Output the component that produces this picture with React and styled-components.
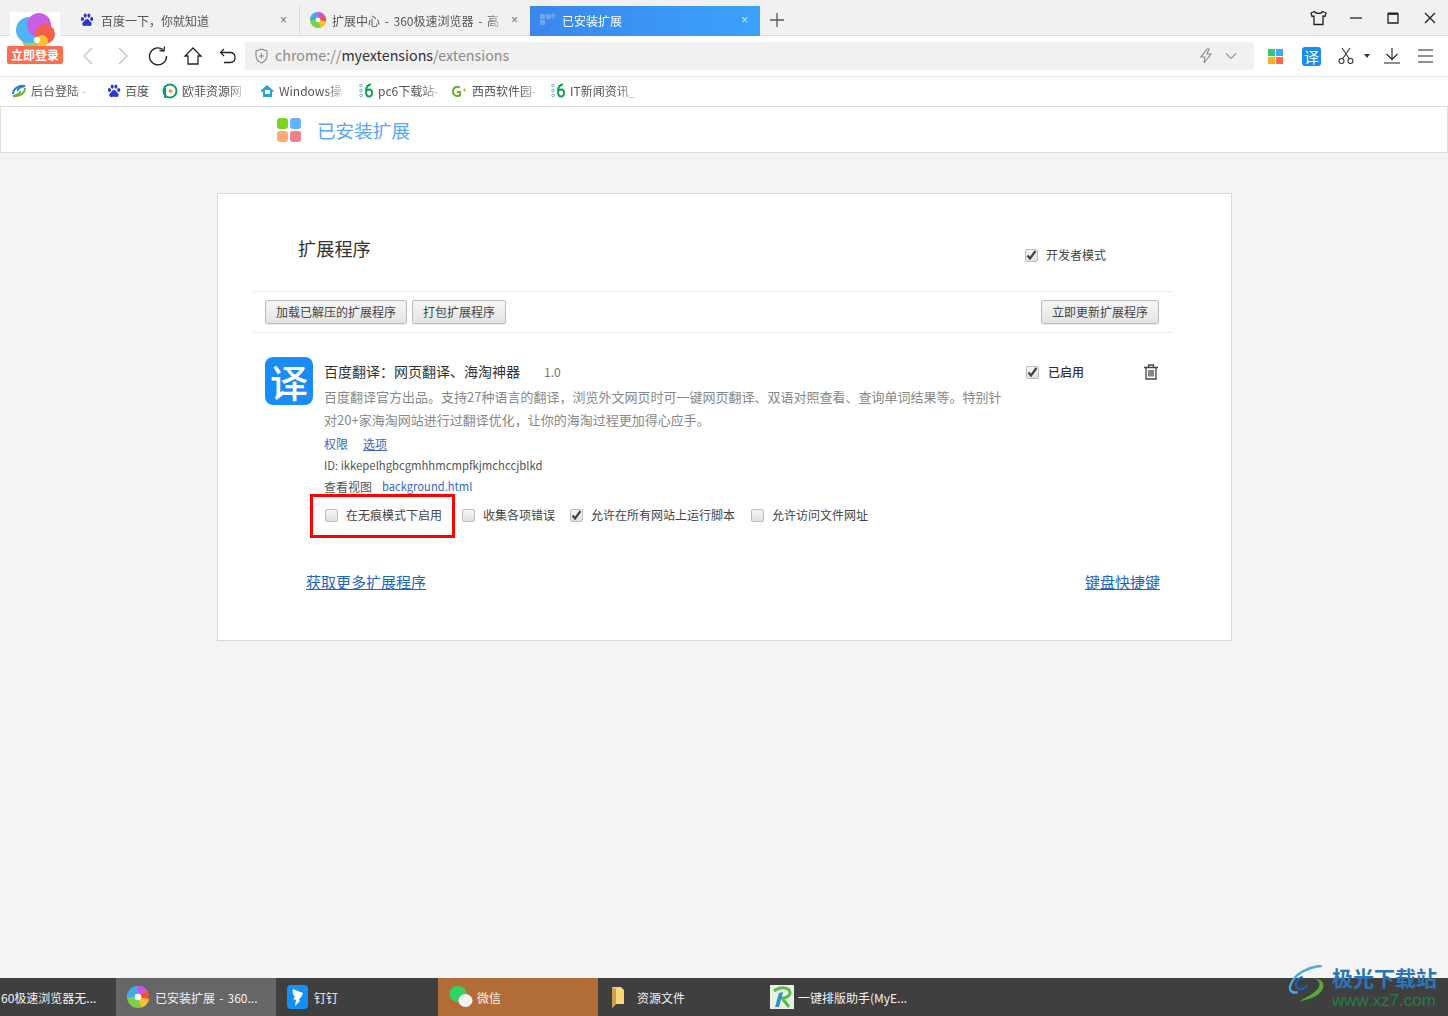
import React from "react";
import styled, { createGlobalStyle } from "styled-components";

const GlobalStyle = createGlobalStyle`
  html, body {
    margin: 0;
    padding: 0;
    background: #f4f4f4;
    overflow: hidden;
  }
  * { box-sizing: border-box; }
  body {
    font-family: "Noto Sans CJK SC", "Noto Sans", "Liberation Sans", sans-serif;
    font-size: 12px;
    color: #333;
  }
`;

const Win = styled.div`
  position: relative;
  width: 1448px;
  height: 1016px;
  display: flex;
  flex-direction: column;
`;

/* tab strip */
const TabBar = styled.div`
  height: 36px;
  flex: none;
  display: flex;
  align-items: flex-end;
  background: #f1f1f1;
  border-bottom: 1px solid #dcdcdc;
  padding-left: 70px;
`;

const Tab = styled.div`
  width: ${(p) => p.$w}px;
  height: 30px;
  flex: none;
  display: flex;
  align-items: center;
  margin-bottom: -1px;
  padding: 0 10px 2px;
  gap: ${(p) => p.$gap || 7}px;
  border-right: ${(p) => (p.$sep ? "1px solid #d8d8d8" : "none")};
  color: ${(p) => (p.$active ? "#fff" : "#555")};
  background: ${(p) => (p.$active ? "linear-gradient(90deg, #3a86ee, #3ba2fb)" : "transparent")};
`;

const TabTitle = styled.span`
  flex: 1;
  white-space: nowrap;
  overflow: hidden;
  font-size: 12px;
  word-spacing: 2px;
  -webkit-mask-image: linear-gradient(90deg, #000 90%, transparent);
`;

const TabClose = styled.span`
  width: 9px;
  flex: none;
  font-size: 12px;
  line-height: 12px;
  font-family: "Liberation Sans", sans-serif;
  color: ${(p) => (p.$active ? "#cfe4ff" : "#777")};
`;

const NewTab = styled.div`
  width: 34px;
  height: 30px;
  display: flex;
  align-items: center;
  justify-content: center;
`;

const WinControls = styled.div`
  margin-left: auto;
  height: 35px;
  display: flex;
  align-items: center;
  padding-right: 10px;
  gap: 21px;
`;

/* toolbar */
const ToolBar = styled.div`
  height: 41px;
  flex: none;
  display: flex;
  align-items: center;
  background: #fff;
  border-bottom: 1px solid #e4e4e4;
  padding-left: 78px;
`;

const NavGroup = styled.div`
  display: flex;
  align-items: center;
  flex: none;
  gap: 15px;
  width: 167px;
`;

const Address = styled.div`
  width: 1009px;
  height: 28px;
  flex: none;
  background: #f1f1f1;
  border-radius: 3px;
  display: flex;
  align-items: center;
  padding: 0 17px 0 9px;
  gap: 6px;
  font-size: 14.3px;
  color: #8a8a8a;
`;

const Url = styled.div`
  flex: 1;
  padding-bottom: 3px;
  b { font-weight: 400; color: #333; }
`;

const BoltSlot = styled.div`
  margin-right: 6px;
`;

const RightTools = styled.div`
  display: flex;
  align-items: center;
  flex: none;
  padding-left: 13px;
`;

const ToolSlot = styled.div`
  width: ${(p) => p.$w}px;
  display: flex;
  align-items: center;
  justify-content: center;
`;

const TranslateBadge = styled.div`
  width: ${(p) => p.$size}px;
  height: ${(p) => p.$size}px;
  flex: none;
  border-radius: ${(p) => Math.round(p.$size / 6)}px;
  background: #1a8cf5;
  color: #fff;
  display: flex;
  align-items: center;
  justify-content: center;
  font-size: ${(p) => Math.round(p.$size * 0.8)}px;
  line-height: 1;
  font-weight: ${(p) => (p.$size > 30 ? 500 : 400)};
`;

/* bookmarks */
const Bookmarks = styled.div`
  height: 30px;
  flex: none;
  display: flex;
  align-items: center;
  background: #fff;
  border-bottom: 1px solid #dedede;
  padding-bottom: 2px;
`;

const Mark = styled.div`
  width: ${(p) => p.$w}px;
  flex: none;
  display: flex;
  align-items: center;
  gap: ${(p) => p.$gap || 5}px;
  padding-left: 12px;
  color: #555;
  font-size: 12px;
  white-space: nowrap;
`;

const MarkText = styled.span`
  display: block;
  -webkit-mask-image: ${(p) => (p.$fade ? "linear-gradient(90deg, #000 75%, rgba(0,0,0,0.25))" : "none")};
`;

/* page */
const PageHead = styled.div`
  height: 46px;
  flex: none;
  background: #fff;
  border: 1px solid #dedede;
  border-top: none;
  display: flex;
  align-items: center;
  padding-left: 276px;
  gap: 16px;
`;

const HeadTitle = styled.div`
  font-size: 18.6px;
  color: #5aa7f6;
`;

const Grid = styled.div`
  display: grid;
  grid-template-columns: ${(p) => p.$cell}px ${(p) => p.$cell}px;
  gap: ${(p) => p.$gap}px;
`;

const Cell = styled.div`
  height: ${(p) => p.$s}px;
  border-radius: ${(p) => p.$r || 0}px;
  background: ${(p) => p.$c};
`;

const Main = styled.main`
  flex: 1;
  background: #f4f4f4;
  padding: 40px 0 0 217px;
`;

const Card = styled.section`
  width: 1015px;
  height: 448px;
  background: #fff;
  border: 1px solid #d9d9d9;
  padding: 0 59px 0 35px;
`;

const TopRow = styled.div`
  height: 98px;
  border-bottom: 1px solid #ececec;
  display: flex;
  padding: 41px 0 0 45px;
`;

const Heading = styled.h1`
  margin: 0;
  font-size: 18.2px;
  line-height: 26px;
  font-weight: 400;
  color: #333;
  width: 727px;
`;

const DevMode = styled.div`
  padding-top: 12px;
`;

const Check = styled.label`
  display: flex;
  align-items: center;
  gap: ${(p) => p.$gap || 8}px;
  font-size: 12px;
  line-height: 16px;
  color: ${(p) => p.$c || "#444"};
  font-weight: ${(p) => p.$weight || 400};
  white-space: nowrap;
`;

const Box = styled.span`
  width: 13px;
  height: 13px;
  flex: none;
  border: 1px solid #bcbcbc;
  border-radius: 2px;
  background: linear-gradient(#f6f6f6, #e2e2e2);
  display: flex;
  align-items: center;
  justify-content: center;
`;

const ButtonRow = styled.div`
  height: 41px;
  border-bottom: 1px solid #ececec;
  display: flex;
  align-items: center;
  padding: 0 12px;
  gap: 5px;
`;

const Btn = styled.button`
  height: 24px;
  padding: 0 0 2px;
  width: ${(p) => p.$w}px;
  margin-left: ${(p) => p.$ml || 0}px;
  border: 1px solid #bcbcbc;
  border-radius: 2px;
  background: linear-gradient(#f6f6f6, #e4e4e4);
  box-shadow: 0 1px 1px rgba(0, 0, 0, 0.08);
  font-family: inherit;
  font-size: 12px;
  color: #444;
`;

const Ext = styled.div`
  display: flex;
  padding: 24px 0 0 12px;
  height: 239px;
`;

const ExtBody = styled.div`
  width: 701px;
  margin-left: 11px;
  flex: none;
`;

const NameRow = styled.div`
  height: 28px;
  display: flex;
  align-items: center;
  gap: 24px;
  font-size: 14px;
  color: #333;
`;

const Version = styled.span`
  font-size: 12px;
  color: #777;
`;

const Desc = styled.p`
  margin: 0;
  width: 680px;
  font-size: 13px;
  line-height: 23px;
  color: #888;
  height: 46px;
`;

const MetaRow = styled.div`
  height: ${(p) => p.$h || 22}px;
  display: flex;
  align-items: center;
  gap: ${(p) => p.$gap || 10}px;
  font-size: ${(p) => p.$fs || 12}px;
  color: #555;
`;

const Lnk = styled.a`
  color: #3b66c8;
  font-size: ${(p) => p.$fs || 12}px;
  text-decoration: ${(p) => (p.$u ? "underline" : "none")};
`;

const OptionRow = styled.div`
  display: flex;
  align-items: center;
  height: 34px;
  padding: 2px 0 0 1px;
`;

const Option = styled.div`
  position: relative;
  width: ${(p) => p.$w}px;
  flex: none;
`;

/* annotation drawn over the first option */
const RedBox = styled.div`
  position: absolute;
  left: -15px;
  top: -13px;
  width: 145px;
  height: 44px;
  border: 3px solid #f00;
`;

const EnabledCol = styled.div`
  display: flex;
  align-items: flex-start;
  padding: 7px 0 0 1px;
`;

const EnabledSlot = styled.div`
  width: 118px;
`;

const BottomRow = styled.div`
  display: flex;
  justify-content: space-between;
  padding: 0 12px 0 53px;
`;

const BottomLink = styled.a`
  font-size: 15px;
  line-height: 20px;
  color: #2263c9;
  text-decoration: underline;
`;

/* taskbar */
const TaskBar = styled.div`
  height: 38px;
  flex: none;
  display: flex;
  background: #3f3f3f;
`;

const Task = styled.div`
  width: ${(p) => p.$w}px;
  flex: none;
  display: flex;
  align-items: center;
  gap: ${(p) => p.$gap || 6}px;
  padding-left: ${(p) => p.$pl ?? 11}px;
  color: #f2f2f2;
  font-size: 12px;
  word-spacing: 1.5px;
  white-space: nowrap;
  background: ${(p) => p.$bg || "transparent"};
`;

/* overlays */
const Avatar = styled.div`
  position: absolute;
  left: 10px;
  top: 12px;
  width: 50px;
  height: 40px;
  background: #fff;
  display: flex;
  justify-content: center;
`;

const Login = styled.div`
  position: absolute;
  left: 7px;
  top: 46px;
  width: 56px;
  height: 18px;
  background: #fb6e50;
  border-radius: 2px;
  color: #fff;
  font-size: 12px;
  font-weight: 700;
  line-height: 18px;
  text-align: center;
`;

const Watermark = styled.div`
  position: absolute;
  left: 1288px;
  top: 965px;
  display: flex;
`;

const WmText = styled.div`
  display: flex;
  flex-direction: column;
  align-items: flex-start;
`;

const WmTitle = styled.div`
  font-size: 21px;
  line-height: 25px;
  font-weight: 700;
  color: #2c74b8;
  white-space: nowrap;
`;

const WmUrl = styled.div`
  font-family: "Liberation Sans", sans-serif;
  font-size: 17px;
  line-height: 20px;
  color: #1c7f3f;
  margin-top: 1px;
`;

const Ico = ({ w = 18, h = 18, vb = "0 0 18 18", color = "#333", sw = 1.3, children }) => (
  <svg width={w} height={h} viewBox={vb} fill="none" stroke={color} strokeWidth={sw} style={{ flex: "none", display: "block" }}>
    {children}
  </svg>
);

const Paw = ({ size = 14 }) => (
  <svg width={size} height={size} viewBox="0 0 14 14" style={{ flex: "none" }} fill="#2a3bd0">
    <ellipse cx="2.4" cy="6" rx="1.6" ry="2" />
    <ellipse cx="5.2" cy="2.6" rx="1.5" ry="2.1" />
    <ellipse cx="8.9" cy="2.6" rx="1.5" ry="2.1" />
    <ellipse cx="11.7" cy="6" rx="1.6" ry="2" />
    <path d="M7 6c-2 0-2.4 2-4 3.2C1.6 10.400 2.400 13.500 5 13c1-.2 3-.2 4 0 2.600.5 3.400-2.600 2-3.800C9.400 8 9 6 7 6z" />
  </svg>
);

const Swirl = ({ size = 16 }) => (
  <svg width={size} height={size} viewBox="0 0 20 20" style={{ flex: "none" }}>
    <circle cx="10" cy="10" r="10" fill="#7ad04a" />
    <path d="M10 10 A10 10 0 0 1 4 2 A10 10 0 0 1 10 0z" fill="#3fa9f5" />
    <path d="M0 10 A10 10 0 0 1 4 2 L10 10z" fill="#3fa9f5" />
    <path d="M10 10 L10 0 A10 10 0 0 1 18 4z" fill="#d64fe0" />
    <path d="M10 10 L18 4 A10 10 0 0 1 20 12z" fill="#f0503c" />
    <path d="M10 10 L20 12 A10 10 0 0 1 13 19.500z" fill="#fbc02d" />
    <circle cx="10" cy="10" r="3" fill="#fff" />
  </svg>
);

const Six = ({ color = "#0f9d58" }) => (
  <svg width="17" height="17" viewBox="0 0 17 17" style={{ flex: "none" }} fill="none">
    <circle cx="3" cy="3.500" r="1.300" stroke="#6aaee8" />
    <circle cx="3" cy="8.500" r="1.300" stroke="#6aaee8" />
    <circle cx="3" cy="13.500" r="1.300" stroke="#6aaee8" />
    <path d="M13 2.500C10 2.500 8 5 8 9.500c0 3 1 5 3 5s3-1.800 3-3.800-1.200-3.200-3-3.200-3 1.500-3 2.500" stroke={color} strokeWidth="2" />
  </svg>
);

const CheckMark = () => (
  <svg width="11" height="10" viewBox="0 0 11 10">
    <path d="M1.500 5.500 L4 8.500 L9.500 1" fill="none" stroke="#444" strokeWidth="2.200" />
  </svg>
);

const CheckBox = ({ on, children, ...rest }) => (
  <Check {...rest}>
    <Box>{on && <CheckMark />}</Box>
    {children}
  </Check>
);

const marks = [
  { w: 95, text: "后台登陆 -", fade: true, icon: (
    <svg width="14" height="14" viewBox="0 0 14 14" fill="none" style={{ flex: "none" }}>
      <path d="M1 10C1 5 6 1 13 2 8 3 5 5 6 7" stroke="#2a7fd0" strokeWidth="2" />
      <path d="M13 4c0 5-5 9-12 8 5-1 8-3 7-5" stroke="#6db33f" strokeWidth="2" />
    </svg>
  ) },
  { w: 55, text: "百度", gap: 4, icon: <Paw /> },
  { w: 97, text: "欧菲资源网", gap: 4, fade: true, icon: (
    <svg width="16" height="16" viewBox="0 0 16 16" fill="none" style={{ flex: "none" }}>
      <circle cx="8" cy="8" r="6.500" stroke="#0e9a7a" strokeWidth="2" />
      <path d="M3 3v12" stroke="#0e9a7a" strokeWidth="2" />
      <circle cx="8.500" cy="8" r="2" fill="#f0a030" />
    </svg>
  ) },
  { w: 99, text: "Windows操", fade: true, gap: 4, icon: (
    <svg width="16" height="14" viewBox="0 0 16 14" style={{ flex: "none" }}>
      <path d="M1 7 8 1l7 6-2 1v5H4V8z" fill="#27a4d8" />
      <rect x="6" y="6" width="5" height="4" fill="#fff" />
    </svg>
  ) },
  { w: 93, text: "pc6下载站-", fade: true, gap: 3, icon: <Six /> },
  { w: 99, text: "西西软件园-", fade: true, gap: 5, icon: (
    <svg width="16" height="14" viewBox="0 0 16 14" fill="none" style={{ flex: "none" }}>
      <path d="M9 3.500C6 1.500 2 3.500 2 7.500s4 5.500 7 4V8H6" stroke="#66b32e" strokeWidth="2" />
      <path d="M12 6h3M13.500 4.500v3" stroke="#e0a020" strokeWidth="1" />
    </svg>
  ) },
  { w: 100, text: "IT新闻资讯_", fade: true, gap: 3, icon: <Six /> },
];

const tasks = [
  { w: 116, pl: 1, text: "60极速浏览器无..." },
  { w: 160, bg: "#666", text: "已安装扩展 - 360...", icon: <Swirl size={22} /> },
  { w: 162, text: "钉钉", icon: (
    <svg width="21" height="24" viewBox="0 0 21 24" style={{ flex: "none" }}>
      <rect x="0" y="0" width="21" height="24" rx="4" fill="#1490f5" />
      <path d="M6 4c4 2 8 3 10 4-1 3-2 5-4 6l1 2-5 5 1-6-3-1 2-2C6 10 5 7 6 4z" fill="#fff" />
    </svg>
  ) },
  { w: 160, bg: "#b26d37", gap: 3, text: "微信", icon: (
    <svg width="25" height="24" viewBox="0 0 25 24" style={{ flex: "none" }}>
      <ellipse cx="9" cy="9" rx="8.500" ry="8" fill="#2fd464" />
      <ellipse cx="16.500" cy="15.500" rx="7" ry="6.500" fill="#f1f1f1" />
    </svg>
  ) },
  { w: 160, gap: 13, pl: 14, text: "资源文件", icon: (
    <svg width="12" height="24" viewBox="0 0 12 24" style={{ flex: "none" }}>
      <path d="M0 2h9l3 3v14H4l-4 4z" fill="#f6d77c" />
      <path d="M0 2l4 2v15l-4 4z" fill="#c9a24e" />
    </svg>
  ) },
  { w: 200, pl: 12, gap: 4, text: "一键排版助手(MyE...", icon: (
    <svg width="24" height="24" viewBox="0 0 24 24" style={{ flex: "none" }}>
      <rect width="24" height="24" fill="#e8f3e4" />
      <path d="M4 6c6-5 16-4 16 2 0 3-4 5-8 5l7 9" fill="none" stroke="#5cb94a" strokeWidth="3" />
      <path d="M9 8 5 22h4l4-15z" fill="#2f8ecf" />
    </svg>
  ) },
];

const App = () => {
  return (
    <>
      <GlobalStyle />
      <Win>
        <TabBar>
          <Tab $w={230} $sep>
            <Paw />
            <TabTitle>百度一下，你就知道</TabTitle>
            <TabClose>×</TabClose>
          </Tab>
          <Tab $w={230} $gap={6}>
            <Swirl />
            <TabTitle>扩展中心 - 360极速浏览器 - 高</TabTitle>
            <TabClose>×</TabClose>
          </Tab>
          <Tab $w={230} $active $gap={6}>
            <svg width="16" height="14" viewBox="0 0 16 14" fill="#6aa5f0" style={{ flex: "none" }}>
              <rect x="0" y="1" width="5" height="5" />
              <rect x="6" y="1" width="5" height="5" />
              <rect x="0" y="7" width="5" height="5" />
              <path d="M12 0h1.500v2H16v1.500h-2.500V6H12V3.500H10V2h2z" />
            </svg>
            <TabTitle>已安装扩展</TabTitle>
            <TabClose $active>×</TabClose>
          </Tab>
          <NewTab>
            <Ico w={14} h={14} vb="0 0 14 14" color="#555">
              <path d="M7 0v14M0 7h14" />
            </Ico>
          </NewTab>
          <WinControls>
            <Ico w={17} h={16} vb="0 0 17 16" color="#222">
              <path d="M4.500 1.500 1 3l1 3.500 2-.5v8.500h9V6l2 .5L16 3l-3.500-1.500C11.500 4 5.500 4 4.500 1.500z" />
            </Ico>
            <Ico w={16} h={16} vb="0 0 16 16" color="#222">
              <path d="M2 8h12" />
            </Ico>
            <Ico w={16} h={16} vb="0 0 16 16" color="#222">
              <path d="M3 4h10v9H3z" />
              <path d="M3 3.500h10" strokeWidth="2" />
            </Ico>
            <Ico w={16} h={16} vb="0 0 16 16" color="#222">
              <path d="M3 3l10 10M13 3 3 13" />
            </Ico>
          </WinControls>
        </TabBar>

        <ToolBar>
          <NavGroup>
            <Ico w={20} h={20} vb="0 0 20 20" color="#c4c4c4">
              <path d="M14 2 6 10l8 8" />
            </Ico>
            <Ico w={20} h={20} vb="0 0 20 20" color="#c4c4c4">
              <path d="m6 2 8 8-8 8" />
            </Ico>
            <Ico w={20} h={20} vb="0 0 20 20" color="#222">
              <path d="M15 3.500A8.500 8.500 0 1 0 18.500 10" />
              <path d="M11.500 4.500 16 5l.5-4.500" />
            </Ico>
            <Ico w={20} h={20} vb="0 0 20 20" color="#222">
              <path d="M10 2 2 10h3v8h10v-8h3z" />
            </Ico>
            <Ico w={20} h={20} vb="0 0 20 20" color="#222">
              <path d="M6 3 2.500 6.500 6 10" />
              <path d="M3 6.500h9c3 0 5 2 5 5s-2 5-5 5H6" />
            </Ico>
          </NavGroup>
          <Address>
            <Ico w={15} h={16} vb="0 0 15 16" color="#8a8a8a" sw={1.1}>
              <path d="M7.500 1 2 3v5c0 3 2.500 5.500 5.500 7 3-1.500 5.500-4 5.500-7V3z" />
              <path d="M5 8h5M7.500 5.500v5" />
            </Ico>
            <Url>chrome://<b>myextensions</b>/extensions</Url>
            <BoltSlot>
              <Ico w={14} h={16} vb="0 0 14 16" color="#888" sw={1.1}>
                <path d="M8 1 2 9h4l-1 6 7-9H8l2-5z" />
              </Ico>
            </BoltSlot>
            <Ico w={12} h={12} vb="0 0 12 12" color="#999" sw={1.1}>
              <path d="M1 3.500 6 8.500l5-5" />
            </Ico>
          </Address>
          <RightTools>
            <ToolSlot $w={16}>
              <Grid $cell={7} $gap={1}>
                <Cell $s={7} $c="#2ecc71" />
                <Cell $s={7} $c="#3fa9f5" />
                <Cell $s={7} $c="#fbb024" />
                <Cell $s={7} $c="#fb6a45" />
              </Grid>
            </ToolSlot>
            <ToolSlot $w={57}>
              <TranslateBadge $size={19}>译</TranslateBadge>
            </ToolSlot>
            <ToolSlot $w={12}>
              <Ico w={16} h={18} vb="0 0 16 18" color="#333" sw={1.1}>
                <circle cx="3.500" cy="14" r="2.500" />
                <circle cx="12.500" cy="14" r="2.500" />
                <path d="M4.500 12 12 1M11.500 12 4 1" />
              </Ico>
            </ToolSlot>
            <ToolSlot $w={30}>
              <svg width="6" height="4" viewBox="0 0 6 4" fill="#333" style={{ display: "block" }}>
                <path d="M0 0h6L3 4z" />
              </svg>
            </ToolSlot>
            <ToolSlot $w={20}>
              <Ico w={16} h={16} vb="0 0 16 16" color="#222" sw={1.1}>
                <path d="M8 0v11M2.500 6 8 11.500 13.500 6M0 15h16" />
              </Ico>
            </ToolSlot>
            <ToolSlot $w={46}>
              <Ico w={15} h={14} vb="0 0 15 14" color="#222" sw={1.1}>
                <path d="M0 1h15M0 7h15M0 13h15" />
              </Ico>
            </ToolSlot>
          </RightTools>
        </ToolBar>

        <Bookmarks>
          {marks.map((m) => (
            <Mark key={m.text} $w={m.w} $gap={m.gap}>
              {m.icon}
              <MarkText $fade={m.fade}>{m.text}</MarkText>
            </Mark>
          ))}
        </Bookmarks>

        <PageHead>
          <Grid $cell={11} $gap={2}>
            <Cell $s={11} $r={3} $c="#7ed321" />
            <Cell $s={11} $r={3} $c="#5fb4ff" />
            <Cell $s={11} $r={3} $c="#ffa97a" />
            <Cell $s={11} $r={3} $c="#f2808a" />
          </Grid>
          <HeadTitle>已安装扩展</HeadTitle>
        </PageHead>

        <Main>
          <Card>
            <TopRow>
              <Heading>扩展程序</Heading>
              <DevMode>
                <CheckBox on>开发者模式</CheckBox>
              </DevMode>
            </TopRow>
            <ButtonRow>
              <Btn $w={142}>加载已解压的扩展程序</Btn>
              <Btn $w={94}>打包扩展程序</Btn>
              <Btn $w={118} $ml={530}>立即更新扩展程序</Btn>
            </ButtonRow>
            <Ext>
              <TranslateBadge $size={48}>译</TranslateBadge>
              <ExtBody>
                <NameRow>
                  百度翻译：网页翻译、海淘神器
                  <Version>1.0</Version>
                </NameRow>
                <Desc>
                  百度翻译官方出品。支持27种语言的翻译，浏览外文网页时可一键网页翻译、双语对照查看、查询单词结果等。特别针对20+家海淘网站进行过翻译优化，让你的海淘过程更加得心应手。
                </Desc>
                <MetaRow $h={24} $gap={15}>
                  <Lnk>权限</Lnk>
                  <Lnk $u>选项</Lnk>
                </MetaRow>
                <MetaRow $h={20} $fs={11.3}>ID: ikkepelhgbcgmhhmcmpfkjmchccjblkd</MetaRow>
                <MetaRow $h={22}>
                  查看视图
                  <Lnk $fs={11.2}>background.html</Lnk>
                </MetaRow>
                <OptionRow>
                  <Option $w={137}>
                    <CheckBox>在无痕模式下启用</CheckBox>
                    <RedBox />
                  </Option>
                  <Option $w={108}>
                    <CheckBox>收集各项错误</CheckBox>
                  </Option>
                  <Option $w={181}>
                    <CheckBox on>允许在所有网站上运行脚本</CheckBox>
                  </Option>
                  <Option $w={130}>
                    <CheckBox>允许访问文件网址</CheckBox>
                  </Option>
                </OptionRow>
              </ExtBody>
              <EnabledCol>
                <EnabledSlot>
                  <CheckBox on $gap={9} $c="#333" $weight={500}>已启用</CheckBox>
                </EnabledSlot>
                <Ico w={14} h={16} vb="0 0 14 16" color="#444" sw={1.3}>
                  <path d="M0 3.500h14M4.500 3.500V1h5v2.500M2 3.500V15h10V3.500M5 6v6.500M7 6v6.500M9 6v6.500" />
                </Ico>
              </EnabledCol>
            </Ext>
            <BottomRow>
              <BottomLink>获取更多扩展程序</BottomLink>
              <BottomLink>键盘快捷键</BottomLink>
            </BottomRow>
          </Card>
        </Main>

        <TaskBar>
          {tasks.map((t) => (
            <Task key={t.text} $w={t.w} $pl={t.pl} $bg={t.bg} $gap={t.gap}>
              {t.icon}
              {t.text}
            </Task>
          ))}
        </TaskBar>

        <Avatar>
          <svg width="42" height="34" viewBox="0 0 42 34">
            <path d="M6 24h26v10H10z" fill="#8ad46c" />
            <circle cx="15" cy="18" r="13" fill="#4fb4f5" />
            <circle cx="25" cy="13" r="12" fill="#c85ee6" />
            <circle cx="31" cy="22" r="10" fill="#f2604a" />
            <circle cx="28" cy="29" r="6" fill="#fbc02d" />
            <circle cx="23" cy="28" r="3" fill="#fff" />
          </svg>
        </Avatar>
        <Login>立即登录</Login>

        <Watermark>
          <svg width="44" height="40" viewBox="0 0 60 46" preserveAspectRatio="none" fill="none">
            <path d="M46 1C28 2 8 10 3 24c-2 6 4 9 10 7" stroke="#4aa9e0" strokeWidth="3" />
            <path d="M20 14c-8 2-12 8-8 12 4 3 12 2 14-3" stroke="#1d5fa8" strokeWidth="3" />
            <path d="M34 16c10 0 11 7 6 12-6 6-16 9-24 14 10-2 28-5 32-16 2-6-4-11-14-10z" fill="#5aa83a" />
          </svg>
          <WmText>
            <WmTitle>极光下载站</WmTitle>
            <WmUrl>www.xz7.com</WmUrl>
          </WmText>
        </Watermark>
      </Win>
    </>
  );
};

export default App;
